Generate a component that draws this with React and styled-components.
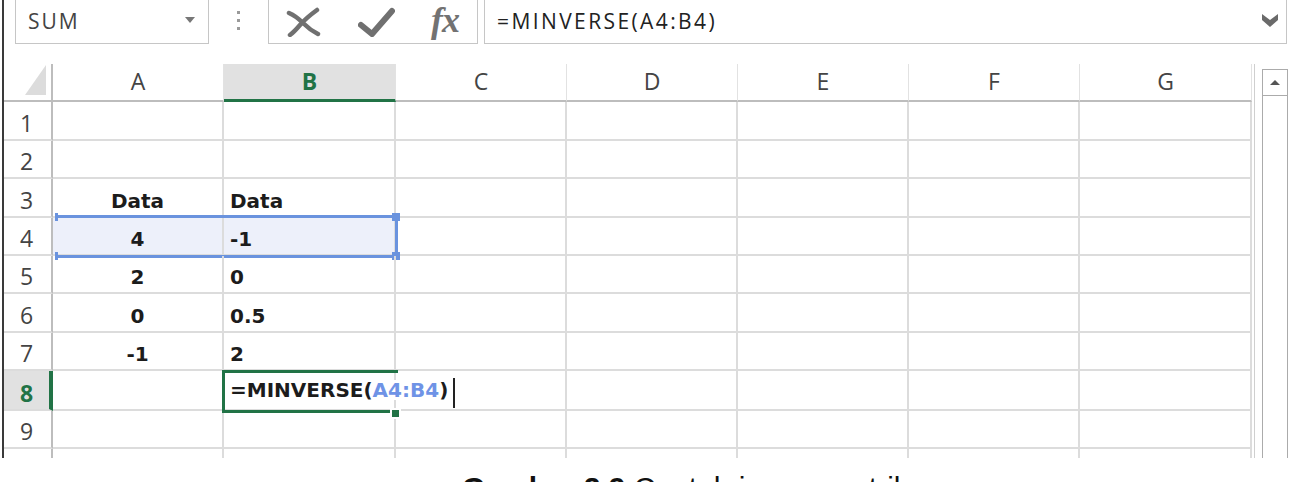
import styled, { createGlobalStyle, css } from 'styled-components';

const GlobalStyle = createGlobalStyle`
  html, body {
    margin: 0;
    padding: 0;
    background: #ffffff;
  }
  body {
    overflow: hidden;
    font-family: "Open Sans", "Liberation Sans", sans-serif;
  }
`;

const green = '#217346';
const gridLine = '#dcdcdc';
const headLine = '#bdbdbd';
const blue = '#6a93de';
const colTemplate = '49px 171px 172px 171px 171px 171px 171px 172px';
const letters = ['A', 'B', 'C', 'D', 'E', 'F', 'G'];

const rows = [
  { n: 1, h: 39 },
  { n: 2, h: 38 },
  { n: 3, h: 39, a: 'Data', b: 'Data' },
  { n: 4, h: 38, a: '4', b: '-1', sel: true },
  { n: 5, h: 38, a: '2', b: '0' },
  { n: 6, h: 39, a: '0', b: '0.5' },
  { n: 7, h: 38, a: '-1', b: '2' },
  { n: 8, h: 40, active: true },
  { n: 9, h: 38 },
];

const Page = styled.div`
  width: 1310px;
  height: 482px;
  overflow: hidden;
`;

const Frame = styled.div`
  margin-left: 2px;
  border-left: 2px solid #3a3a3a;
  height: 458px;
  display: flex;
  flex-direction: column;
`;

const Toolbar = styled.div`
  display: flex;
  height: 44px;
  flex-shrink: 0;
`;

const Box = styled.div`
  box-sizing: border-box;
  height: 44px;
  border: 1px solid #c6c6c6;
  border-top: none;
  display: flex;
  align-items: center;
`;

const NameBox = styled(Box)`
  margin-left: 11px;
  width: 194px;
  padding: 0 13px 2px 12px;
  justify-content: space-between;
  font-size: 21px;
  letter-spacing: 2px;
  color: #444;
`;

const DropCaret = styled.span`
  width: 0;
  height: 0;
  border-left: 5px solid transparent;
  border-right: 5px solid transparent;
  border-top: 6px solid #777;
  margin-bottom: 2px;
`;

const Grip = styled.div`
  width: 59px;
  display: flex;
  flex-direction: column;
  align-items: center;
  justify-content: center;
  gap: 5px;
  padding-bottom: 4px;
`;

const Dot = styled.span`
  width: 3px;
  height: 3px;
  background: #9a9a9a;
`;

const FuncBox = styled(Box)`
  width: 210px;
  padding: 0 18px 0 17px;
  justify-content: space-between;
`;

const Fx = styled.span`
  font-family: "Liberation Serif", "DejaVu Serif", serif;
  font-style: italic;
  font-weight: 700;
  font-size: 36px;
  line-height: 1;
  color: #727272;
  letter-spacing: -1px;
  margin-top: -4px;
`;

const FormulaBox = styled(Box)`
  margin-left: 6px;
  width: 803px;
  padding: 0 8px 2px 12px;
  justify-content: space-between;
  font-size: 21px;
  letter-spacing: 2.4px;
  color: #222;
`;

const Sheet = styled.div`
  margin-top: 20px;
  display: flex;
  flex: 1;
  min-height: 0;
`;

const Table = styled.div`
  width: 1248px;
  padding-right: 2px;
  border-right: 1px solid #cfcfcf;
`;

const Row = styled.div`
  position: relative;
  display: grid;
  grid-template-columns: ${colTemplate};
  height: ${p => p.$h}px;
`;

const Corner = styled.div`
  box-sizing: border-box;
  border-right: 2px solid ${headLine};
  border-bottom: 2px solid ${headLine};
  display: flex;
  align-items: flex-end;
  padding: 0 0 5px 21px;
`;

const CornerMark = styled.span`
  width: 0;
  height: 0;
  border-left: 21px solid transparent;
  border-bottom: 30px solid #dcdcdc;
`;

const ColHead = styled.div`
  box-sizing: border-box;
  border-right: 1px solid #e2e2e2;
  border-bottom: ${p => (p.$active ? `3px solid ${green}` : `2px solid ${headLine}`)};
  background: ${p => (p.$active ? '#e1e1e1' : '#fff')};
  display: flex;
  align-items: flex-end;
  justify-content: center;
  padding-bottom: ${p => (p.$active ? 6 : 7)}px;
  font-size: 23px;
  line-height: 1;
  color: ${p => (p.$active ? green : '#444')};
  font-weight: ${p => (p.$active ? 700 : 400)};
`;

const RowHead = styled.div`
  box-sizing: border-box;
  border-right: ${p => (p.$active ? `4px solid ${green}` : `2px solid ${headLine}`)};
  border-bottom: ${p => (p.$last ? 'none' : `2px solid ${gridLine}`)};
  background: ${p => (p.$active ? '#e1e1e1' : '#fff')};
  display: flex;
  align-items: flex-end;
  justify-content: center;
  padding: 0 ${p => (p.$active ? 0 : 2)}px 4px 0;
  font-size: 23px;
  line-height: 1;
  color: ${p => (p.$active ? green : '#444')};
  font-weight: ${p => (p.$active ? 700 : 400)};
`;

const Cell = styled.div`
  box-sizing: border-box;
  border-right: 2px solid ${gridLine};
  border-bottom: ${p => (p.$last ? 'none' : `2px solid ${gridLine}`)};
  background: ${p => (p.$sel ? '#edf0fa' : 'transparent')};
  display: flex;
  align-items: flex-end;
  justify-content: ${p => (p.$center ? 'center' : 'flex-start')};
  padding: 0 0 5px ${p => (p.$center ? 0 : 6)}px;
  font-family: "DejaVu Sans", "Liberation Sans", sans-serif;
  font-weight: 700;
  font-size: 20px;
  line-height: 1;
  color: #1c1c1c;
  white-space: nowrap;
`;

const EditText = styled.span`
  position: relative;
  z-index: 1;
  background: #fff;
  margin-bottom: 4px;
  padding-right: 2px;
`;

const Ref = styled.span`
  color: #6f93e6;
`;

const Caret = styled.span`
  position: absolute;
  right: -5px;
  top: -2px;
  width: 2px;
  height: 30px;
  background: #222;
`;

const RangeBox = styled.div`
  position: absolute;
  left: 54px;
  top: -3px;
  width: 340px;
  height: 43px;
  box-sizing: border-box;
  border: 3px solid ${blue};
  border-left: none;
  pointer-events: none;
`;

const Handle = styled.span`
  position: absolute;
  height: 8px;
  background: ${blue};
  ${p => (p.$bottom ? css`bottom: -5px;` : css`top: -5px;`)}
  ${p => (p.$left ? css`left: -3px; width: 3px;` : css`right: -5px; width: 8px;`)}
`;

const ActiveBox = styled.div`
  position: absolute;
  left: 218px;
  top: -1px;
  width: 176px;
  height: 43px;
  box-sizing: border-box;
  border: 3px solid ${green};
  border-right: none;
  pointer-events: none;
  z-index: 2;
`;

const FillHandle = styled.span`
  position: absolute;
  left: 165px;
  top: 35px;
  width: 11px;
  height: 11px;
  box-sizing: border-box;
  border: 2px solid #fff;
  background: ${green};
`;

const ScrollBar = styled.div`
  margin: 5px 0 0 7px;
  width: 26px;
  box-sizing: border-box;
  border-left: 1px solid #ababab;
  border-right: 1px solid #ababab;
`;

const ScrollUp = styled.div`
  height: 27px;
  box-sizing: border-box;
  border-top: 1px solid #ababab;
  border-bottom: 1px solid #ababab;
  display: flex;
  align-items: center;
  justify-content: center;
`;

const UpArrow = styled.span`
  width: 0;
  height: 0;
  border-left: 5px solid transparent;
  border-right: 5px solid transparent;
  border-bottom: 5px solid #555;
`;

const Caption = styled.div`
  margin-top: 15px;
  padding-left: 462px;
  font-family: "Liberation Sans", Arial, sans-serif;
  font-size: 30px;
  line-height: 30px;
  color: #111;
  white-space: nowrap;
`;

const CrossIcon = () => (
  <svg width="35" height="30" viewBox="0 0 35 30">
    <path d="M3 6 Q10 9 17 16 T32 27 M31 3 Q20 11 14 18 T4 28" fill="none" stroke="#707070" strokeWidth="4.5" strokeLinecap="round" />
  </svg>
);

const CheckIcon = () => (
  <svg width="37" height="30" viewBox="0 0 37 30">
    <path d="M3 18 L14 27 L34 4" fill="none" stroke="#707070" strokeWidth="6" strokeLinecap="round" strokeLinejoin="round" />
  </svg>
);

const Chevron = () => (
  <svg width="16" height="13" viewBox="0 0 16 13">
    <path d="M0 0 L8 6 L16 0 L16 6 L8 13 L0 6 Z" fill="#6a6a6a" />
  </svg>
);

export default function App() {
  return (
    <Page>
      <GlobalStyle />
      <Frame>
        <Toolbar>
          <NameBox>
            SUM
            <DropCaret />
          </NameBox>
          <Grip>
            <Dot />
            <Dot />
            <Dot />
          </Grip>
          <FuncBox>
            <CrossIcon />
            <CheckIcon />
            <Fx>fx</Fx>
          </FuncBox>
          <FormulaBox>
            =MINVERSE(A4:B4)
            <Chevron />
          </FormulaBox>
        </Toolbar>
        <Sheet>
          <Table>
            <Row $h={38}>
              <Corner>
                <CornerMark />
              </Corner>
              {letters.map(l => (
                <ColHead key={l} $active={l === 'B'}>{l}</ColHead>
              ))}
            </Row>
            {rows.map(r => (
              <Row key={r.n} $h={r.h}>
                <RowHead $active={r.active}>{r.n}</RowHead>
                <Cell $center $sel={r.sel}>{r.a}</Cell>
                <Cell $sel={r.sel}>
                  {r.active ? (
                    <EditText>
                      =MINVERSE(<Ref>A4:B4</Ref>)
                      <Caret />
                    </EditText>
                  ) : (
                    r.b
                  )}
                </Cell>
                {letters.slice(2).map(l => <Cell key={l} />)}
                {r.sel && (
                  <RangeBox>
                    <Handle />
                    <Handle $bottom />
                    <Handle $left />
                    <Handle $left $bottom />
                  </RangeBox>
                )}
                {r.active && (
                  <ActiveBox>
                    <FillHandle />
                  </ActiveBox>
                )}
              </Row>
            ))}
            <Row $h={9}>
              <RowHead $last />
              {letters.map(l => <Cell key={l} $last />)}
            </Row>
          </Table>
          <ScrollBar>
            <ScrollUp>
              <UpArrow />
            </ScrollUp>
          </ScrollBar>
        </Sheet>
      </Frame>
      <Caption>
        <b>Gambar 2.9</b> Contoh invers matriks
      </Caption>
    </Page>
  );
}
